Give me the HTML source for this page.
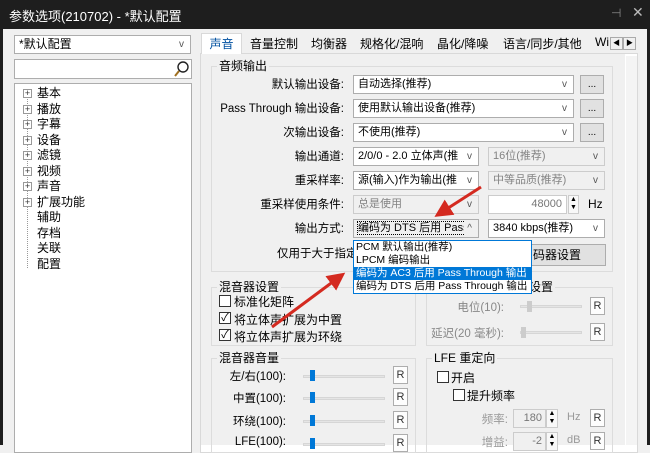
<!DOCTYPE html><html><head><meta charset="utf-8"><style>
*{margin:0;padding:0;box-sizing:border-box}
body{width:650px;height:445px;overflow:hidden;background:#f0f0f0;font:11px "Liberation Sans","Noto Sans CJK SC",sans-serif;color:#000;position:relative}
.a{position:absolute;white-space:nowrap}
.cb{position:absolute;background:#fff;border:1px solid #adadad;height:19px;padding-left:4px;line-height:17px;overflow:hidden;white-space:nowrap}
.cb.g{background:#f0f0f0;color:#838383;border-color:#ccc}
.cb .v{position:absolute;right:6px;top:0;font-size:10px;color:#555;background:inherit;padding-left:3px}
.btn{position:absolute;background:#e1e1e1;border:1px solid #adadad;text-align:center;line-height:17px;height:19px;width:24px;font-size:10px}
.gb{position:absolute;border:1px solid #dcdcdc}
.gb span{position:absolute;top:-9px;left:5px;background:#f0f0f0;padding:0 2px;line-height:16px;font-size:12px}
.lbl{position:absolute;text-align:right;white-space:nowrap;font-size:11.5px}
.ck{position:absolute;width:12px;height:12px;border:1px solid #333;background:#fff;font-size:11px;line-height:10px;text-align:center}
.sl{position:absolute;height:3px;background:#e5e5e5;border:1px solid #d6d6d6}
.th{position:absolute;width:5px;height:11px;background:#0078d7}
.r{position:absolute;width:15px;height:18px;background:#fdfdfd;border:1px solid #adadad;text-align:center;line-height:16px;font-size:11px;color:#333}
.tree div{position:absolute;left:36px;font-size:12px}
.pl{position:absolute;left:22px;width:9px;height:9px;border:1px solid #999;background:#fff;font-size:9px;line-height:7px;text-align:center;color:#333}
</style></head><body>
<div class="a" style="left:0;top:0;width:650px;height:29px;background:#1e1e1e"></div>
<div class="a" style="left:9px;top:6px;color:#fff;font-size:13px">参数选项(210702) - *默认配置</div>
<div class="a" style="left:611px;top:6px;color:#888;font-size:12px">⊣</div>
<div class="a" style="left:632px;top:4px;color:#bbb;font-size:14px">✕</div>
<div class="a" style="left:0;top:29px;width:3px;height:416px;background:#1e1e1e"></div>
<div class="a" style="left:647px;top:29px;width:3px;height:416px;background:#1e1e1e"></div>

<div class="cb" style="left:14px;top:35px;width:177px;font-size:12px">*默认配置<span class="v">v</span></div>
<div class="cb" style="left:14px;top:59px;width:178px;height:20px"></div>
<svg class="a" style="left:172px;top:59px" width="20" height="20"><circle cx="11" cy="8" r="5" fill="none" stroke="#222" stroke-width="1.4"/><line x1="7" y1="12" x2="3" y2="17" stroke="#a07020" stroke-width="2"/></svg>
<div class="a tree" style="left:14px;top:83px;width:178px;height:370px;background:#fff;border:1px solid #adadad">
<div style="left:12px;top:8px;height:176px;border-left:1px dotted #999;width:0"></div>
<span class="pl" style="left:8px;top:5px">+</span><div style="left:22px;top:0">基本</div>
<span class="pl" style="left:8px;top:21px">+</span><div style="left:22px;top:16px">播放</div>
<span class="pl" style="left:8px;top:36px">+</span><div style="left:22px;top:31px">字幕</div>
<span class="pl" style="left:8px;top:52px">+</span><div style="left:22px;top:47px">设备</div>
<span class="pl" style="left:8px;top:67px">+</span><div style="left:22px;top:62px">滤镜</div>
<span class="pl" style="left:8px;top:83px">+</span><div style="left:22px;top:78px">视频</div>
<span class="pl" style="left:8px;top:98px">+</span><div style="left:22px;top:93px">声音</div>
<span class="pl" style="left:8px;top:114px">+</span><div style="left:22px;top:109px">扩展功能</div>
<div style="left:22px;top:124px">辅助</div>
<div style="left:22px;top:140px">存档</div>
<div style="left:22px;top:155px">关联</div>
<div style="left:22px;top:171px">配置</div>
</div>

<div class="a" style="left:200px;top:53px;width:438px;height:400px;background:#fff;border:1px solid #d9d9d9"></div>
<div class="a" style="left:201px;top:33px;width:41px;height:21px;background:#fff;border:1px solid #d9d9d9;border-bottom:none;color:#0050a0;text-align:center;line-height:20px;font-size:12px">声音</div>
<div class="a" style="left:250px;top:35px;font-size:12px">音量控制</div>
<div class="a" style="left:311px;top:35px;font-size:12px">均衡器</div>
<div class="a" style="left:360px;top:35px;font-size:12px">规格化/混响</div>
<div class="a" style="left:437px;top:35px;font-size:12px">晶化/降噪</div>
<div class="a" style="left:503px;top:35px;font-size:12px">语言/同步/其他</div>
<div class="a" style="left:595px;top:35px;font-size:12px">Wi</div>
<div class="a" style="left:610px;top:37px;width:13px;height:13px;border:1px solid #aaa;background:#f0f0f0;font-size:7px;text-align:center;line-height:11px">◀</div>
<div class="a" style="left:623px;top:37px;width:13px;height:13px;border:1px solid #aaa;background:#f0f0f0;font-size:7px;text-align:center;line-height:11px">▶</div>
<div class="a" style="left:626px;top:56px;width:11px;height:389px;background:#f4f4f4"></div>

<div class="a" style="left:201px;top:54px;width:424px;height:391px;background:#f0f0f0"></div>

<div class="gb" style="left:211px;top:66px;width:402px;height:206px"><span>音频输出</span></div>
<div class="lbl" style="right:306px;top:76px">默认输出设备:</div>
<div class="cb" style="left:353px;top:75px;width:221px">自动选择(推荐)<span class="v">v</span></div><div class="btn" style="left:580px;top:75px">...</div>
<div class="lbl" style="right:306px;top:100px">Pass Through 输出设备:</div>
<div class="cb" style="left:353px;top:99px;width:221px">使用默认输出设备(推荐)<span class="v">v</span></div><div class="btn" style="left:580px;top:99px">...</div>
<div class="lbl" style="right:306px;top:124px">次输出设备:</div>
<div class="cb" style="left:353px;top:123px;width:221px">不使用(推荐)<span class="v">v</span></div><div class="btn" style="left:580px;top:123px">...</div>
<div class="lbl" style="right:306px;top:148px">输出通道:</div>
<div class="cb" style="left:353px;top:147px;width:126px">2/0/0 - 2.0 立体声(推<span class="v">v</span></div>
<div class="cb g" style="left:488px;top:147px;width:117px">16位(推荐)<span class="v">v</span></div>
<div class="lbl" style="right:306px;top:172px">重采样率:</div>
<div class="cb" style="left:353px;top:171px;width:126px">源(输入)作为输出(推<span class="v">v</span></div>
<div class="cb g" style="left:488px;top:171px;width:117px">中等品质(推荐)<span class="v">v</span></div>
<div class="lbl" style="right:306px;top:196px">重采样使用条件:</div>
<div class="cb g" style="left:353px;top:195px;width:126px">总是使用<span class="v">v</span></div>
<div class="cb g" style="left:488px;top:195px;width:79px;text-align:right;padding-right:4px;color:#777;background:#fff">48000</div>
<div class="a" style="left:568px;top:195px;width:11px;height:19px;border:1px solid #ccc;font-size:7px;line-height:8px;text-align:center;background:#f8f8f8">▲<br>▼</div>
<div class="a" style="left:588px;top:197px;font-size:12px">Hz</div>
<div class="lbl" style="right:306px;top:220px">输出方式:</div>
<div class="cb" style="left:353px;top:219px;width:126px;background:#f0f0f0"><span style="outline:1px dotted #000">编码为 DTS 后用 Pass</span><span class="v">^</span></div>
<div class="cb" style="left:488px;top:219px;width:117px">3840 kbps(推荐)<span class="v">v</span></div>
<div class="lbl" style="left:277px;top:245px">仅用于大于指定</div>
<div class="a" style="left:530px;top:244px;width:76px;height:22px;background:#e1e1e1;border:1px solid #adadad;padding-left:2px;line-height:20px;font-size:12px">码器设置</div>

<div class="gb" style="left:211px;top:287px;width:205px;height:59px"><span>混音器设置</span></div>
<div class="ck" style="left:219px;top:295px"></div><div class="a" style="left:234px;top:293px;font-size:12px">标准化矩阵</div>
<div class="ck" style="left:219px;top:312px">✓</div><div class="a" style="left:234px;top:311px;font-size:12px">将立体声扩展为中置</div>
<div class="ck" style="left:219px;top:329px">✓</div><div class="a" style="left:234px;top:328px;font-size:12px">将立体声扩展为环绕</div>

<div class="gb" style="left:426px;top:287px;width:187px;height:59px"><span style="left:100px">设置</span></div>
<div class="lbl" style="right:146px;top:299px;color:#888">电位(10):</div>
<div class="sl" style="left:520px;top:305px;width:62px"></div><div class="th" style="left:527px;top:301px;background:#ccc"></div>
<div class="r" style="left:590px;top:297px">R</div>
<div class="lbl" style="right:146px;top:325px;color:#888">延迟(20 毫秒):</div>
<div class="sl" style="left:520px;top:331px;width:62px"></div><div class="th" style="left:521px;top:327px;background:#ccc"></div>
<div class="r" style="left:590px;top:323px">R</div>

<div class="gb" style="left:211px;top:358px;width:205px;height:95px"><span>混音器音量</span></div>
<div class="lbl" style="right:364px;top:368px">左/右(100):</div><div class="sl" style="left:303px;top:375px;width:82px"></div><div class="th" style="left:310px;top:370px"></div><div class="r" style="left:393px;top:366px">R</div>
<div class="lbl" style="right:364px;top:390px">中置(100):</div><div class="sl" style="left:303px;top:397px;width:82px"></div><div class="th" style="left:310px;top:392px"></div><div class="r" style="left:393px;top:388px">R</div>
<div class="lbl" style="right:364px;top:413px">环绕(100):</div><div class="sl" style="left:303px;top:420px;width:82px"></div><div class="th" style="left:310px;top:415px"></div><div class="r" style="left:393px;top:411px">R</div>
<div class="lbl" style="right:364px;top:436px">LFE(100):</div><div class="sl" style="left:303px;top:443px;width:82px"></div><div class="th" style="left:310px;top:438px"></div><div class="r" style="left:393px;top:434px">R</div>

<div class="gb" style="left:426px;top:358px;width:187px;height:95px"><span>LFE 重定向</span></div>
<div class="ck" style="left:437px;top:371px"></div><div class="a" style="left:451px;top:369px;font-size:12px">开启</div>
<div class="ck" style="left:453px;top:389px"></div><div class="a" style="left:467px;top:387px;font-size:12px">提升频率</div>
<div class="lbl" style="right:142px;top:411px;color:#999">频率:</div>
<div class="cb g" style="left:513px;top:409px;width:33px;text-align:right;padding-right:3px;color:#777">180</div>
<div class="a" style="left:546px;top:409px;width:12px;height:19px;border:1px solid #ccc;font-size:7px;line-height:8px;text-align:center;background:#f8f8f8">▲<br>▼</div>
<div class="a" style="left:567px;top:411px;color:#999">Hz</div><div class="r" style="left:590px;top:409px">R</div>
<div class="lbl" style="right:142px;top:434px;color:#999">增益:</div>
<div class="cb g" style="left:513px;top:432px;width:33px;text-align:right;padding-right:3px;color:#777">-2</div>
<div class="a" style="left:546px;top:432px;width:12px;height:19px;border:1px solid #ccc;font-size:7px;line-height:8px;text-align:center;background:#f8f8f8">▲<br>▼</div>
<div class="a" style="left:567px;top:434px;color:#999">dB</div><div class="r" style="left:590px;top:432px">R</div>

<div class="a" style="left:353px;top:240px;width:179px;height:54px;background:#fff;border:1px solid #0078d7;line-height:13px;font-size:10.5px;overflow:hidden">
<div style="padding-left:2px">PCM 默认输出(推荐)</div>
<div style="padding-left:2px">LPCM 编码输出</div>
<div style="padding-left:2px;background:#0078d7;color:#fff">编码为 AC3 后用 Pass Through 输出</div>
<div style="padding-left:2px">编码为 DTS 后用 Pass Through 输出</div>
</div>

<svg class="a" style="left:0;top:0" width="650" height="445">
<defs><marker id="m" markerWidth="6" markerHeight="6" refX="3" refY="3" orient="auto" markerUnits="strokeWidth"><path d="M0,0 L6,3 L0,6 z" fill="#d42a20"/></marker></defs>
<line x1="481" y1="187" x2="442" y2="212" stroke="#d42a20" stroke-width="3" marker-end="url(#m)"/>
<line x1="272" y1="327" x2="338" y2="278" stroke="#d42a20" stroke-width="3" marker-end="url(#m)"/>
</svg>
</body></html>
